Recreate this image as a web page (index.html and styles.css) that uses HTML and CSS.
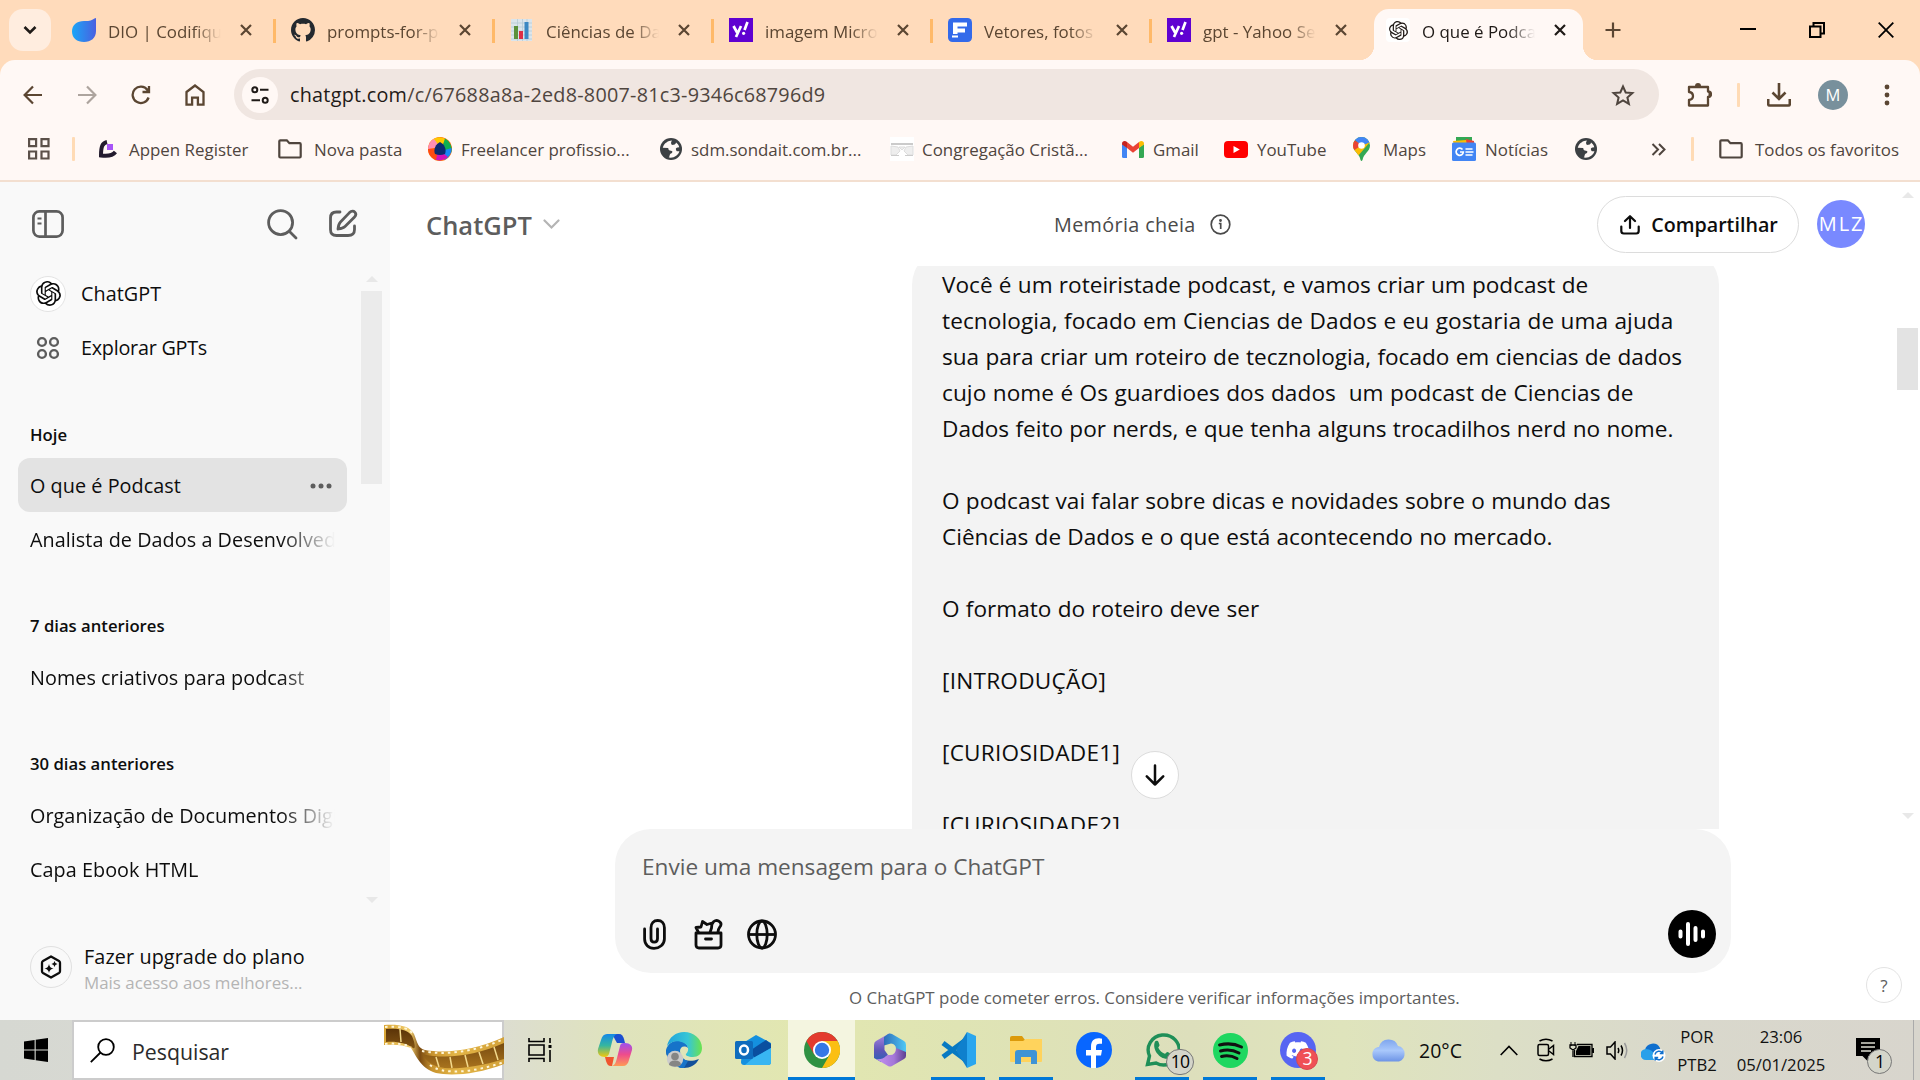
FILE: index.html
```html
<!DOCTYPE html>
<html lang="pt-BR">
<head>
<meta charset="utf-8">
<title>O que é Podcast</title>
<link rel="stylesheet" href="styles.css">
</head>
<body>
<svg class="sprite" width="0" height="0" aria-hidden="true">
  <symbol id="close" viewBox="0 0 12 12"><path d="M1 1l10 10M11 1L1 11" fill="none" stroke="currentColor" stroke-width="2.2"/></symbol>
  <symbol id="folder" viewBox="0 0 24 20"><path d="M1.3 2.3q0-1 1-1h6.5l2.6 2.9h10.3q1 0 1 1v12.3q0 1-1 1H2.3q-1 0-1-1z" fill="none" stroke="currentColor" stroke-width="2.2"/></symbol>
  <symbol id="world" viewBox="0 0 24 24"><circle cx="12" cy="12" r="12" fill="#3c4043"/><path d="M13 2.800C9 3 4.500 5.500 3 10.500l6 .5c0 2 1 3 3 3 2.500.3 1.500 2.500 0 3-2 .5-1 3-2.500 4.300 5.500 1 10.500-2.300 11.700-6.800-2 0-3 .3-3.700-1.500-.8-2 .5-3 3.500-3-.5-2.500-1.800-4-3.500-5.200-.5 2-2 2.700-4.500 2.700-1.500-1.500-1-3 0-4.700z" fill="#fff8f5"/></symbol>
  <symbol id="yahoo" viewBox="0 0 24 24"><path fill="#5f01d1" d="M0 0h24v24H0z"/><path fill="none" stroke="#fff" stroke-width="2.700" d="M4.500 8l3.600 6.500M12 8L7 19M18.500 4l-3 8"/><circle cx="14.600" cy="15.300" r="1.600" fill="#fff"/></symbol>
  <symbol id="openai" viewBox="0 0 24 24"><path fill="currentColor" d="M22.2819 9.8211a5.9847 5.9847 0 0 0-.5157-4.9108 6.0462 6.0462 0 0 0-6.5098-2.9A6.0651 6.0651 0 0 0 4.9807 4.1818a5.9847 5.9847 0 0 0-3.9977 2.9 6.0462 6.0462 0 0 0 .7427 7.0966 5.98 5.98 0 0 0 .511 4.9107 6.051 6.051 0 0 0 6.5146 2.9001A5.9847 5.9847 0 0 0 13.2599 24a6.0557 6.0557 0 0 0 5.7718-4.2058 5.9894 5.9894 0 0 0 3.9977-2.9001 6.0557 6.0557 0 0 0-.7475-7.0729zm-9.022 12.6081a4.4755 4.4755 0 0 1-2.8764-1.0408l.1419-.0804 4.7783-2.7582a.7948.7948 0 0 0 .3927-.6813v-6.7369l2.02 1.1686a.071.071 0 0 1 .038.052v5.5826a4.504 4.504 0 0 1-4.4945 4.4944zm-9.6607-4.1254a4.4708 4.4708 0 0 1-.5346-3.0137l.142.0852 4.783 2.7582a.7712.7712 0 0 0 .7806 0l5.8428-3.3685v2.3324a.0804.0804 0 0 1-.0332.0615L9.74 19.9502a4.4992 4.4992 0 0 1-6.1408-1.6464zM2.3408 7.8956a4.485 4.485 0 0 1 2.3655-1.9728V11.6a.7664.7664 0 0 0 .3879.6765l5.8144 3.3543-2.0201 1.1685a.0757.0757 0 0 1-.071 0l-4.8303-2.7865A4.504 4.504 0 0 1 2.3408 7.872zm16.5963 3.8558L13.1038 8.364 15.1192 7.2a.0757.0757 0 0 1 .071 0l4.8303 2.7913a4.4944 4.4944 0 0 1-.6765 8.1042v-5.6772a.79.79 0 0 0-.407-.667zm2.0107-3.0231l-.142-.0852-4.7735-2.7818a.7759.7759 0 0 0-.7854 0L9.409 9.2297V6.8974a.0662.0662 0 0 1 .0284-.0615l4.8303-2.7866a4.4992 4.4992 0 0 1 6.6802 4.66zM8.3065 12.863l-2.02-1.1638a.0804.0804 0 0 1-.038-.0567V6.0742a4.4992 4.4992 0 0 1 7.3757-3.4537l-.142.0805L8.704 5.459a.7948.7948 0 0 0-.3927.6813zm1.0976-2.3654l2.602-1.4998 2.6069 1.4998v2.9994l-2.5974 1.4997-2.6067-1.4997Z"/></symbol>
</svg>

<header class="browser">
  <div class="tabstrip">
    <div class="tab-search"><svg width="14" height="10" viewBox="0 0 14 10"><path d="M1.500 2l5.500 5.500L12.500 2" fill="none" stroke="#1f1a17" stroke-width="2.600"/></svg></div>
    <div class="tabs">
      <div class="tab"><svg width="24" height="24" viewBox="0 0 24 24"><defs><linearGradient id="gd"><stop offset="0" stop-color="#1ba6f7"/><stop offset="1" stop-color="#4a5fe0"/></linearGradient></defs><path fill="url(#gd)" d="M24 0v13c0 7-5 11-12 11S0 20 0 13.500 5 3 12 3h4c4 0 6-3 8-3z"/></svg><span class="tab-title">DIO | Codifique o</span><svg class="x" width="12" height="12"><use href="#close"/></svg></div>
      <div class="tab"><svg width="24" height="24" viewBox="0 0 16 16"><path fill="#24292f" d="M8 0C3.580 0 0 3.580 0 8c0 3.540 2.290 6.530 5.470 7.590.4.07.55-.17.55-.38 0-.19-.01-.82-.01-1.490-2.010.37-2.530-.49-2.690-.94-.09-.23-.48-.94-.82-1.130-.28-.15-.68-.52-.01-.53.63-.01 1.080.58 1.230.82.72 1.210 1.870.87 2.330.66.07-.52.28-.87.51-1.070-1.780-.2-3.640-.89-3.640-3.950 0-.87.31-1.590.82-2.150-.08-.2-.36-1.020.08-2.120 0 0 .67-.21 2.200.82.64-.18 1.320-.27 2-.27s1.360.09 2 .27c1.530-1.040 2.200-.82 2.200-.82.44 1.100.16 1.920.08 2.120.51.56.82 1.270.82 2.150 0 3.070-1.870 3.750-3.650 3.950.29.25.54.73.54 1.480 0 1.070-.01 1.930-.01 2.200 0 .21.15.46.55.38A8.010 8.010 0 0 0 16 8c0-4.420-3.580-8-8-8z"/></svg><span class="tab-title">prompts-for-pod</span><svg class="x" width="12" height="12"><use href="#close"/></svg></div>
      <div class="tab"><svg width="24" height="24" viewBox="0 0 24 24"><path fill="#dbe5ec" d="M1 1h21v22H1z"/><path stroke="#b5cad6" stroke-width=".8" d="M1 5h21M1 9h21M1 13h21M1 17h21M1 21h21M7.500 1v22M12.500 1v22M17 1v22"/><path fill="#5c913b" d="M4 8h4v13H4z"/><path fill="#dd2e44" d="M9 13h4v8H9z"/><path fill="#3b88c3" d="M14.500 4h4v17h-4z"/></svg><span class="tab-title">Ciências de Dados</span><svg class="x" width="12" height="12"><use href="#close"/></svg></div>
      <div class="tab"><svg width="24" height="24"><use href="#yahoo"/></svg><span class="tab-title">imagem Microfone</span><svg class="x" width="12" height="12"><use href="#close"/></svg></div>
      <div class="tab"><svg width="24" height="24" viewBox="0 0 24 24"><rect width="24" height="24" rx="4.500" fill="#336aea"/><path fill="#fff" d="M5 4.500h14v4H9.500v2H17v4H9.500V16H5zM4 17.500h6v2H4z"/></svg><span class="tab-title">Vetores, fotos e</span><svg class="x" width="12" height="12"><use href="#close"/></svg></div>
      <div class="tab"><svg width="24" height="24"><use href="#yahoo"/></svg><span class="tab-title">gpt - Yahoo Sear</span><svg class="x" width="12" height="12"><use href="#close"/></svg></div>
      <div class="tab active"><span class="fav"><svg width="19" height="19"><use href="#openai"/></svg></span><span class="tab-title">O que é Podcast</span><svg class="x" width="12" height="12"><use href="#close"/></svg></div>
    </div>
    <svg class="newtab" width="16" height="16" viewBox="0 0 16 16"><path d="M8 .5v15M.5 8h15" stroke="#5b4632" stroke-width="2.200"/></svg>
    <div class="winctl">
      <svg width="16" height="16" viewBox="0 0 16 16"><path d="M0 7h16" stroke="#000" stroke-width="2"/></svg>
      <svg width="16" height="16" viewBox="0 0 16 16"><path d="M1 4.500h10.500V15H1zM4.500 4V1H15v10.500h-3" fill="none" stroke="#000" stroke-width="2"/></svg>
      <svg width="16" height="16" viewBox="0 0 16 16"><path d="M.7.700l14.600 14.600M15.300.700L.7 15.300" stroke="#000" stroke-width="1.800"/></svg>
    </div>
  </div>

  <div class="toolbar">
    <div class="nav">
      <svg width="20" height="20" viewBox="0 0 20 20"><path d="M19 10H2M10 1.500L1.600 10l8.400 8.500" fill="none" stroke="#5b4632" stroke-width="2.200"/></svg>
      <svg width="20" height="20" viewBox="0 0 20 20"><path d="M1 10h17M10 1.500l8.400 8.500-8.400 8.500" fill="none" stroke="#ada49e" stroke-width="2.200"/></svg>
      <svg width="20" height="20" viewBox="0 0 20 20"><path d="M17.600 12.500A8.200 8.200 0 1 1 16.500 5l1 1.300M18 1v6h-6.500" fill="none" stroke="#5b4632" stroke-width="2.300"/></svg>
      <svg width="20" height="22" viewBox="0 0 20 22"><path d="M1.500 8L10 1.500 18.500 8v12.700h-5.600v-7H7.100v7H1.500z" fill="none" stroke="#5b4632" stroke-width="2.300"/></svg>
    </div>
    <div class="omnibox">
      <span class="siteinfo"><svg width="18" height="18" viewBox="0 0 18 18" fill="none" stroke="#1f1a17" stroke-width="2"><circle cx="3.800" cy="3.800" r="2.500"/><path d="M9 3.800h8.500M.5 14.200h8.500"/><circle cx="14.200" cy="14.200" r="2.500"/></svg></span>
      <span class="url"><b>chatgpt.com</b>/c/67688a8a-2ed8-8007-81c3-9346c68796d9</span>
      <svg class="star" width="24" height="22" viewBox="0 0 24 22"><path d="M12 2.500l2.700 6 6.700.600-5 4.400 1.500 6.400-5.900-3.400-5.900 3.400 1.500-6.400-5-4.400 6.700-.6z" fill="none" stroke="#4f453e" stroke-width="2"/></svg>
    </div>
    <div class="tools">
      <svg width="26" height="26" viewBox="0 0 26 26"><path d="M3 5h19v4.500q3 0 3 2.700T22 15v8.500H3v-5.500q4-.5 4-4T3 10z" fill="none" stroke="#5b4632" stroke-width="2.300" stroke-linejoin="round"/><path d="M9 4a3 3 0 0 1 6 0zM22.500 9.500a2.800 2.800 0 0 1 0 5.400z" fill="#5b4632"/></svg>
      <i class="divider"></i>
      <svg width="24" height="24" viewBox="0 0 24 24"><path d="M12 0v15M5.500 9.500l6.500 6.500 6.500-6.500M1.200 16v5q0 1.500 1.500 1.500h18.600q1.500 0 1.500-1.500v-5" fill="none" stroke="#5b4632" stroke-width="2.600"/></svg>
      <span class="profile">M</span>
      <svg width="6" height="22" viewBox="0 0 6 22" fill="#5b4632"><circle cx="3" cy="3" r="2.400"/><circle cx="3" cy="11" r="2.400"/><circle cx="3" cy="19" r="2.400"/></svg>
    </div>
  </div>

  <div class="bookmarks">
    <span><svg width="22" height="22" viewBox="0 0 22 22" fill="none" stroke="#5b5049" stroke-width="2.200"><path d="M1.100 1.100h7v7h-7zM13.500 1.100h7v7h-7zM1.100 13.500h7v7h-7zM13.500 13.500h7v7h-7z"/></svg></span>
    <span><i class="divider"></i></span>
    <span class="bm g12"><svg width="18" height="18" viewBox="0 0 18 18"><path d="M8 2C3.500 3 2 6 2 15.500c7 1 11.500.5 14.500-3.500" fill="none" stroke="#231b2e" stroke-width="4"/><path fill="#a855f7" d="M8 4h6v6H8z"/></svg>Appen Register</span>
    <span class="bm g12"><svg width="24" height="20"><use href="#folder"/></svg>Nova pasta</span>
    <span class="bm g9"><svg width="24" height="24" viewBox="0 0 24 24"><circle cx="12" cy="12" r="12" fill="#ff6a00"/><path fill="#ffc800" d="M4 3a12 12 0 0 1 15 0l-7 6z"/><path fill="#10b050" d="M17 1.500A12 12 0 0 1 23 16l-9-5z"/><path fill="#1786f5" d="M23.500 11a12 12 0 0 1-7 12l-3-9z"/><path fill="#d212b8" d="M20 20a12 12 0 0 1-14 2l5-9z"/><path fill="#ff4a12" d="M8 23A12 12 0 0 1 0 11l10 2z"/><path fill="#ff8fb2" d="M0 12A12 12 0 0 1 6 2l6 8z"/><path fill="#0b2a70" d="M12 5c4 2 7 7 5 12q-5 2-10 0C5 12 8 7 12 5z"/></svg>Freelancer profissio...</span>
    <span class="bm g9"><svg width="22" height="22"><use href="#world"/></svg>sdm.sondait.com.br...</span>
    <span class="bm g8"><svg width="24" height="24" viewBox="0 0 24 24"><path fill="#fff" d="M0 0h24v24H0z"/><path stroke="#bbb" stroke-width="1.500" d="M1 7h22M8 7h8" fill="none"/><path stroke="#ddd" fill="#eee" d="M1 9l7 1 2 4-4 4H1zM23 9l-7 1-2 4 4 4h5zM9 10h6l-3 3z"/><path stroke="#ccc" d="M1 18.500h8M15 18.500h8"/></svg>Congregação Cristã...</span>
    <span class="bm g9"><svg width="22" height="17" viewBox="0 0 22 17"><path fill="#4285f4" d="M0 3l5 3.500V17H1.500Q0 17 0 15.500z"/><path fill="#34a853" d="M22 3l-5 3.500V17h3.500q1.500 0 1.500-1.500z"/><path fill="#ea4335" d="M5 1l6 4.700L17 1v6l-6 4.800L5 7z"/><path fill="#c5221f" d="M0 3.500V2.500C0 0 3-.7 5 1v6L0 3.500z"/><path fill="#fbbc04" d="M22 3.500V2.500C22 0 19-.7 17 1v6l5-3.500z"/></svg>Gmail</span>
    <span class="bm g9"><svg width="24" height="17" viewBox="0 0 24 17"><rect width="24" height="17" rx="4" fill="red"/><path fill="#fff" d="M9.500 5v7l6.300-3.500z"/></svg>YouTube</span>
    <span class="bm g13"><svg width="17" height="24" viewBox="0 0 17 24"><defs><clipPath id="pin"><path d="M8.500 0A8.500 8.500 0 0 1 17 8.500c0 6-6.500 8-7.500 14.500q-1 2-2 0C6.500 16.500 0 14.500 0 8.500A8.500 8.500 0 0 1 8.500 0z"/></clipPath></defs><g clip-path="url(#pin)"><path fill="#34a853" d="M0 0h17v24H0z"/><path fill="#fbbc04" d="M0 5v12l5 2L17 5z"/><path fill="#ea4335" d="M0 14V2l9 6z"/><path fill="#4285f4" d="M2 3L0 0h17v5l-4 2-5 1z"/></g><circle cx="8.500" cy="8.500" r="3.300" fill="#fff"/></svg>Maps</span>
    <span class="bm g9"><svg width="24" height="24" viewBox="0 0 24 24"><path fill="#34a853" d="M4 0h16v5H4z"/><path fill="#ea4335" d="M14 2l8 2v4H12z"/><path fill="#fbbc04" d="M1 4l13-1 1 5H2z"/><rect y="5.500" width="24" height="18.500" rx="1.500" fill="#4285f4"/><path d="M10.500 12.500A3.600 3.600 0 1 0 11.300 15H8M13.500 12h7M13.500 15h8M13.500 18h7" fill="none" stroke="#fff" stroke-width="1.700"/></svg>Notícias</span>
    <span><svg width="22" height="22"><use href="#world"/></svg></span>
    <span><svg width="15" height="13" viewBox="0 0 15 13"><path d="M1.500 1L7 6.500 1.500 12M8 1l5.500 5.500L8 12" fill="none" stroke="#4f453e" stroke-width="2"/></svg></span>
    <span><i class="divider"></i></span>
    <span class="bm g12"><svg width="24" height="20"><use href="#folder"/></svg>Todos os favoritos</span>
  </div>
</header>

<div class="app">
  <aside class="sidebar">
    <div class="side-head">
      <svg width="32" height="28" viewBox="0 0 32 28" fill="none" stroke="#5d5d5d" stroke-width="2.700"><rect x="1.400" y="1.400" width="29.200" height="25.200" rx="6"/><path d="M13.500 1v26"/><path d="M5.500 8.500h4M5.500 13.500h4" stroke-width="2.200"/></svg>
      <svg class="push" width="31" height="31" viewBox="0 0 31 31" fill="none" stroke="#5d5d5d" stroke-width="2.800" stroke-linecap="round"><circle cx="13.600" cy="13.600" r="12"/><path d="M22.500 22.500l6.500 6.500"/></svg>
      <svg width="30" height="30" viewBox="0 0 30 30" fill="none" stroke="#5d5d5d" stroke-width="2.800" stroke-linecap="round" stroke-linejoin="round"><path d="M12 3H8.500C4.500 3 2.500 5 2.500 9v11.500c0 4 2 6 6 6H20c4 0 6.500-2 6.500-6V17"/><path d="M21.500 3.600c2-2 4.300-1.600 5.300-.5 1.200 1.300 1.200 3.500-.5 5.200L17 17.500c-2 2-4.500 2.200-7 2.500.2-2.700.5-5 2.500-7z"/></svg>
    </div>
    <div class="side-scroll">
      <div class="side-list">
        <div class="row gpt"><span class="ring"><svg width="25" height="25"><use href="#openai"/></svg></span>ChatGPT</div>
        <div class="row gpt"><span class="cell"><svg width="24" height="24" viewBox="0 0 24 24" fill="none" stroke="#5d5d5d" stroke-width="2.400"><circle cx="6" cy="6" r="3.900"/><circle cx="18" cy="6" r="3.900"/><circle cx="6" cy="18" r="3.900"/><circle cx="18" cy="18" r="3.900"/></svg></span><span class="tight">Explorar GPTs</span></div>
        <h3 class="first">Hoje</h3>
        <div class="row current">O que é Podcast<svg width="22" height="6" viewBox="0 0 22 6" fill="#5d5d5d"><circle cx="3" cy="3" r="2.500"/><circle cx="11" cy="3" r="2.500"/><circle cx="19" cy="3" r="2.500"/></svg></div>
        <div class="row"><span class="fade">Analista de Dados a Desenvolvedor</span></div>
        <h3>7 dias anteriores</h3>
        <div class="row"><span class="fade">Nomes criativos para podcast</span></div>
        <h3>30 dias anteriores</h3>
        <div class="row"><span class="fade">Organização de Documentos Digitais</span></div>
        <div class="row"><span class="fade">Capa Ebook HTML</span></div>
      </div>
      <div class="bar side-bar"><i class="up"></i><i class="thumb"></i><i class="down"></i></div>
    </div>
    <div class="upgrade">
      <span class="plan-ring"><svg width="22" height="24" viewBox="0 0 22 24"><path d="M11 1.500l8 4.500q1 .6 1 1.700v8.600q0 1.100-1 1.700l-8 4.500L3 18q-1-.6-1-1.700V7.700Q2 6.600 3 6z" fill="none" stroke="#0d0d0d" stroke-width="2.300" stroke-linejoin="round"/><path d="M9 9q.6 4 4.500 4.500Q9.600 14 9 18q-.6-4-4.500-4.500Q8.400 13 9 9zM14.500 6q.4 2.600 3 3-2.600.4-3 3-.4-2.600-3-3 2.600-.4 3-3z" fill="#0d0d0d"/></svg></span>
      <div class="plan-text"><p>Fazer upgrade do plano</p><small>Mais acesso aos melhores...</small></div>
    </div>
  </aside>

  <main class="main">
    <div class="chat-head">
      <div class="model">ChatGPT<svg width="17" height="11" viewBox="0 0 17 11"><path d="M1.500 1.500l7 7 7-7" fill="none" stroke="#b4b4b4" stroke-width="2.200" stroke-linecap="round"/></svg></div>
      <div class="memory">Memória cheia<svg width="21" height="21" viewBox="0 0 21 21" fill="none" stroke="#4a4a4a" stroke-width="1.700"><circle cx="10.500" cy="10.500" r="9.300"/><path d="M8.800 9.500h1.900V15"/><circle cx="10.500" cy="6.500" r=".6" fill="#4a4a4a"/></svg></div>
      <div class="share"><svg width="20" height="20" viewBox="0 0 20 20" fill="none" stroke="#0d0d0d" stroke-width="2.200" stroke-linecap="round" stroke-linejoin="round"><path d="M10 13V1.500M5 6l5-4.800L15 6M1.300 11.500v4.500q0 2.500 2.500 2.500h12.400q2.500 0 2.500-2.500v-4.500"/></svg>Compartilhar</div>
      <div class="avatar">MLZ</div>
    </div>
    <div class="thread">
      <div class="bubble">
        <p>Você é um roteiristade podcast, e vamos criar um podcast de<br><span class="loose">tecnologia, focado em Ciencias de Dados e eu gostaria de uma ajuda</span><br>sua para criar um roteiro de tecznologia, focado em ciencias de dados<br><span class="loose">cujo nome é Os guardioes dos dados&nbsp; um podcast de Ciencias de</span><br>Dados feito por nerds, e que tenha alguns trocadilhos nerd no nome.</p>
        <p>O podcast vai falar sobre dicas e novidades sobre o mundo das<br>Ciências de Dados e o que está acontecendo no mercado.</p>
        <p>O formato do roteiro deve ser</p>
        <p class="caps">[INTRODUÇÃO]</p>
        <p class="caps">[CURIOSIDADE1]</p>
        <p class="caps">[CURIOSIDADE2]</p>
      </div>
      <span class="to-bottom"><svg width="20" height="22" viewBox="0 0 20 22"><path d="M10 1.500v19M1.800 12.300l8.200 8.200 8.200-8.200" fill="none" stroke="#0d0d0d" stroke-width="2.500" stroke-linecap="round" stroke-linejoin="round"/></svg></span>
    </div>
    <div class="composer">
      <div class="placeholder">Envie uma mensagem para o ChatGPT</div>
      <div class="actions">
        <svg width="23" height="31" viewBox="0 0 23 31"><path d="M1.600 10v10c0 5.500 4 9.400 9.400 9.400s10.400-3.900 10.400-9.400V8.700c0-4.300-2.700-7.200-6.700-7.200S8 4.400 8 8.700V19.500c0 2.300 1.200 3.600 3.200 3.600s3.300-1.300 3.300-3.600V10" fill="none" stroke="#0d0d0d" stroke-width="2.800" stroke-linecap="round"/></svg>
        <svg width="29" height="31" viewBox="0 0 29 31" fill="none" stroke="#0d0d0d" stroke-width="2.800" stroke-linejoin="round" stroke-linecap="round"><path d="M2 14h25v12q0 3-3 3H5q-3 0-3-3zM11.500 20h6"/><path d="M4.500 13.500L2 8.500l5-.5 1.500-5.500L13 5.500l5-1.500-.5 5-1.500 4.500M18.500 4.500c1-3 4-3.500 6-2.500s3 3 2 5c-1.500 2-2 2-2.500 6"/></svg>
        <svg width="30" height="31" viewBox="0 0 30 31" fill="none" stroke="#0d0d0d" stroke-width="2.800"><circle cx="15" cy="15.500" r="13.500"/><ellipse cx="15" cy="15.500" rx="5.200" ry="13.500"/><path d="M1.500 15.500h27"/></svg>
        <span class="voice"><svg width="28" height="24" viewBox="0 0 28 24" stroke="#fff" stroke-width="4" stroke-linecap="round"><path d="M2.500 9.500v5M10 2v20M17.500 6v12M25 9.500v5"/></svg></span>
      </div>
    </div>
    <div class="foot">O ChatGPT pode cometer erros. Considere verificar informações importantes.</div>
    <span class="help">?</span>
    <div class="bar main-bar"><i class="up"></i><i class="thumb"></i><i class="down"></i></div>
  </main>
</div>

<footer class="taskbar">
  <div class="start"><svg width="24" height="24" viewBox="0 0 24 24"><path d="M0 3.400l10.600-1.500v9.500H0zM11.700 1.700L24 0v11.400H11.700zM0 12.500h10.600v9.600L0 20.600zM11.700 12.500H24V24l-12.300-1.700z"/></svg></div>
  <div class="search">
    <svg width="25" height="25" viewBox="0 0 25 25"><circle cx="16" cy="9" r="7.800" fill="none" stroke="#000" stroke-width="1.800"/><path d="M10.500 14.500L.8 24.200" stroke="#000" stroke-width="1.800"/></svg>
    <span>Pesquisar</span>
    <svg class="film" width="120" height="52" viewBox="0 0 120 52"><defs><linearGradient id="fg"><stop offset="0" stop-color="#d9a636"/><stop offset=".22" stop-color="#f1cd6e"/><stop offset=".3" stop-color="#7a4a10"/><stop offset=".4" stop-color="#c8932e"/><stop offset=".6" stop-color="#e3b546"/><stop offset="1" stop-color="#d3a23a"/></linearGradient><linearGradient id="fd" x2="0" y2="1"><stop offset="0" stop-color="#5b3408"/><stop offset="1" stop-color="#a8731e"/></linearGradient></defs>
      <path fill="url(#fg)" d="M0 1c15-1 26 1 30 9 4 10 4 14 11 16 22 4 50 0 79-13v27c-28 11-54 12-68 9-16-5-20-18-25-25-7-3-16-4-27-3z"/>
      <path fill="url(#fd)" d="M2 5c14-1 22 1 26 7 3 7 4 14 1 12C22 19 12 17 2 18zM38 30c25 6 55 1 82-11v16c-28 9-54 11-65 8-10-3-14-8-17-13z"/>
      <path fill="none" stroke="#f3d98c" stroke-width="1.500" d="M16 5l1 13M52 33l3 10M66 33l2 11M81 31l3 12M95 28l4 12M110 23l4 13"/>
      <path fill="none" stroke="#fff6d8" stroke-width="2" stroke-dasharray="2.500 4" d="M1 3c17-1 25 1 29 9M1 20c10-1 20 0 26 3M38 27c25 5 55 0 82-12M46 41c12 10 43 8 74-3"/></svg>
  </div>
  <div class="taskview"><svg width="24" height="24" viewBox="0 0 24 24" fill="none" stroke="#000" stroke-width="1.600"><path d="M1 0v3.500h15V0M1 7h15v10H1zM1 24v-3.500h15V24M22 0v5M22 12v12"/><path d="M20.500 7h3v3h-3z" fill="#000" stroke="none"/></svg></div>
  <div class="apps">
    <div class="wide"><svg width="36" height="36" viewBox="0 0 36 36"><defs><linearGradient id="c1" x2="0" y2="1"><stop offset="0" stop-color="#1488e8"/><stop offset=".5" stop-color="#35b6a0"/><stop offset="1" stop-color="#f4c80c"/></linearGradient><linearGradient id="c2" x2="0" y2="1"><stop offset="0" stop-color="#9d50ee"/><stop offset=".5" stop-color="#ee4c8c"/><stop offset="1" stop-color="#ff9a55"/></linearGradient></defs><path fill="#1b4fd1" d="M15 2h7c3 0 4 2 5 5l1 4h-8z"/><path fill="#f0552f" d="M8 25h9l-2 9h-1c-3 0-4-2-5-5z"/><path fill="url(#c1)" d="M10 2h10c-3 1-4 4-5 8l-3 12c-1 2-2 3-4 3-5 0-8-3-7-8l3-9c1-4 3-6 6-6z"/><path fill="url(#c2)" d="M26 34H15c3-1 4-4 5-8l3-12c1-3 2-3 5-3 5 0 8 3 7 7l-3 10c-1 4-3 6-6 6z"/></svg></div>
    <div class="wide"><svg width="36" height="36" viewBox="0 0 36 36"><defs><linearGradient id="e1"><stop offset="0" stop-color="#1fa3dc"/><stop offset=".6" stop-color="#37c6d6"/><stop offset="1" stop-color="#6be34c"/></linearGradient></defs><path fill="#12509a" d="M13 17c-2 9 7 15 20 10-3 6-9 9-15 9C8 36 0 28 0 18z"/><path fill="#1673c9" d="M0 18C2 11 8 8 14 9c5 1 8 4 8 7-4-3-8-1-8 3 0 8 8 10 8 10l-4 7C8 36 0 28 0 18z"/><path fill="url(#e1)" d="M1 14C3 5 10 0 18 0c10 0 18 7 18 16 0 6-4 9-9 9-5 0-8-2-7-3 4-4 2-9-2-11C12 8 5 9 1 14z"/><circle cx="9" cy="27" r="8.200" fill="#cbcbcb"/><circle cx="9" cy="24.500" r="3.800" fill="#858585"/><path d="M3 33q0-4.500 6-4.500t6 4.500q-6 3.500-12 0z" fill="#858585"/></svg></div>
    <div class="wide"><svg width="36" height="36" viewBox="0 0 36 36"><path fill="#1490df" d="M8 11L21 3l15 8v19q0 3-3 3H9q-3 0-3-3z"/><path fill="#0a4fa0" d="M16 18L31 8l5 4v4L19 26z"/><path fill="#38b6f2" d="M36 16v14q0 3-3 3H10l8-7z"/><rect y="9" width="18" height="18" rx="1.500" fill="#0f6cbd"/><ellipse cx="9" cy="18" rx="4" ry="4.500" fill="none" stroke="#fff" stroke-width="2.500"/></svg></div>
    <div class="focused"><svg width="36" height="36" viewBox="0 0 36 36"><circle cx="18" cy="18" r="18" fill="#2f9142"/><path fill="#e33b2e" d="M2.400 9A18 18 0 0 1 33.600 9H18v9l-7.800 4.500z"/><path fill="#fbbf12" d="M33.600 9A18 18 0 0 1 18 36l7.800-13.500L18 9z"/><circle cx="18" cy="18" r="9" fill="#fff"/><circle cx="18" cy="18" r="7.200" fill="#3577e5"/></svg></div>
    <div><svg width="32" height="36" viewBox="0 0 32 36"><defs><linearGradient id="m1" x2="0" y2="1"><stop offset="0" stop-color="#b28be4"/><stop offset=".6" stop-color="#5d55b8"/><stop offset="1" stop-color="#2b62b4"/></linearGradient><linearGradient id="m2"><stop offset="0" stop-color="#2f6db8"/><stop offset="1" stop-color="#4dc8f6"/></linearGradient><linearGradient id="m3"><stop offset="0" stop-color="#c592f2"/><stop offset=".6" stop-color="#a477d8"/><stop offset="1" stop-color="#5c3f90"/></linearGradient></defs><path fill="url(#m1)" d="M16 1L2 9q-2 1-2 4v13l7 4 7-7-3.500-5V12z"/><path fill="url(#m2)" d="M10 5l4-3q2-1 4 0l12 7q2 1 2 4v9l-10-5q0-5-5-5.500l-7 2z"/><path fill="url(#m3)" d="M32 20v4q0 2-2 3l-12 7q-2 1-4 0L2 27q6 1 10-3l2-1q8 1 8-7z"/></svg></div>
    <div class="open"><svg width="36" height="36" viewBox="0 0 36 36"><path d="M27 7L3 25M3 11l24 18" stroke="#0779c2" stroke-width="5"/><path fill="#0f80cd" d="M27 0v36L17 20v-4z"/><path fill="#2aa6ee" d="M27 0l9 4v28l-9 4z"/></svg></div>
    <div class="open"><svg width="32" height="28" viewBox="0 0 32 28"><path fill="#dc9a0a" d="M0 2q0-2 2-2h10l3 4v3H0z"/><path fill="#ffd35c" d="M0 5h13l3-2h16v22q0 1-1 1H1q-1 0-1-1z"/><path fill="#3f93d5" d="M5 28V17q0-3 3-3h16q3 0 3 3v11h-6v-7H11v7z"/></svg></div>
    <div><svg width="36" height="36" viewBox="0 0 36 36"><circle cx="18" cy="18" r="18" fill="#0866ff"/><path fill="#fff" d="M15 36V23.500h-5V18h5v-3c0-6 3-8.700 7.500-8.700 1.700 0 2.800.2 3.500.4v5h-2.500c-2.500 0-3.500 1-3.500 3.500V18h6l-1 5.500h-5V36z"/></svg></div>
    <div class="open"><svg width="36" height="36" viewBox="0 0 36 36"><path d="M3.500 32.500l2-8.500A15.500 15 0 1 1 12 31z" fill="none" stroke="#1f8f58" stroke-width="3.400"/><path d="M11 9.500c1-1 3-1 3.500.5l1 3c.3 1-1.500 2.200-1.200 2.700 1.500 3 3.500 4.800 6.500 6 .8.200 2-2 2.800-1.700l3.400 1.700c.7.500.3 3-1 4.200C19 30 7 19 11 9.500z" fill="#1f8f58"/></svg><b class="badge">10</b></div>
    <div class="open"><svg width="35" height="35" viewBox="0 0 35 35"><circle cx="17.500" cy="17.500" r="17.500" fill="#1fd760"/><path d="M6.500 12c8-2 16-1 22 2M7.500 18c7-2 13-1 18.500 2M8.500 23.500c6-1.500 10.500-.7 15.500 2" fill="none" stroke="#111" stroke-width="3" stroke-linecap="round"/></svg></div>
    <div class="open"><svg width="36" height="36" viewBox="0 0 36 36"><circle cx="18" cy="18" r="18" fill="#5765f2"/><g transform="translate(6.500 6.500) scale(.95)"><path fill="#fff" d="M20.317 4.3698a19.7913 19.7913 0 00-4.8851-1.5152.0741.0741 0 00-.0785.0371c-.211.3753-.4447.8648-.6083 1.2495-1.8447-.2762-3.68-.2762-5.4868 0-.1636-.3933-.4058-.8742-.6177-1.2495a.077.077 0 00-.0785-.037 19.7363 19.7363 0 00-4.8852 1.515.0699.0699 0 00-.0321.0277C.5334 9.0458-.319 13.5799.0992 18.0578a.0824.0824 0 00.0312.0561c2.0528 1.5076 4.0413 2.4228 5.9929 3.0294a.0777.0777 0 00.0842-.0276c.4616-.6304.8731-1.2952 1.226-1.9942a.076.076 0 00-.0416-.1057c-.6528-.2476-1.2743-.5495-1.8722-.8923a.077.077 0 01-.0076-.1277c.1258-.0943.2517-.1923.3718-.2914a.0743.0743 0 01.0776-.0105c3.9278 1.7933 8.18 1.7933 12.0614 0a.0739.0739 0 01.0785.0095c.1202.099.246.1981.3728.2924a.077.077 0 01-.0066.1276 12.2986 12.2986 0 01-1.873.8914.0766.0766 0 00-.0407.1067c.3604.698.7719 1.3628 1.225 1.9932a.076.076 0 00.0842.0286c1.961-.6067 3.9495-1.5219 6.0023-3.0294a.077.077 0 00.0313-.0552c.5004-5.177-.8382-9.6739-3.5485-13.6604a.061.061 0 00-.0312-.0286zM8.02 15.3312c-1.1825 0-2.1569-1.0857-2.1569-2.419 0-1.3332.9555-2.4189 2.157-2.4189 1.2108 0 2.1757 1.0952 2.1568 2.419 0 1.3332-.9555 2.4189-2.1569 2.4189zm7.9748 0c-1.1825 0-2.1569-1.0857-2.1569-2.419 0-1.3332.9554-2.4189 2.1569-2.4189 1.2108 0 2.1757 1.0952 2.1568 2.419 0 1.3332-.946 2.4189-2.1568 2.4189Z"/></g></svg><b class="badge red">3</b></div>
  </div>
  <div class="weather"><svg width="37" height="26" viewBox="0 0 37 24"><defs><linearGradient id="w" x2="0" y2="1"><stop offset="0" stop-color="#7fa6ee"/><stop offset=".5" stop-color="#a9c8fb"/><stop offset="1" stop-color="#6d94e6"/></linearGradient></defs><path fill="url(#w)" d="M8 23.500a7.500 7.500 0 0 1 0-14.500h1a10 10 0 0 1 19-1 8 8 0 0 1 1 15.500z"/></svg>20°C</div>
  <div class="tray">
    <svg width="18" height="11" viewBox="0 0 18 11"><path d="M.7 10L9 1.500 17.300 10" fill="none" stroke="#000" stroke-width="1.600"/></svg>
    <svg width="18" height="24" viewBox="0 0 18 24" fill="none" stroke="#000" stroke-width="1.500"><rect x="1" y="6.500" width="10.500" height="11" rx="1.500"/><path d="M12 11l4.500-3.500v9L12 13M2.500 3q6.500-3.500 13 0M2.500 21q6.500 3.500 13 0"/></svg>
    <svg width="25" height="17" viewBox="0 0 25 17"><path d="M8 2.500h15v12H5.500V8" fill="none" stroke="#000" stroke-width="1.300"/><path d="M9.500 4h12v9H7V9z"/><path d="M23.500 6.500H25v4h-1.500zM2 0v4M6 0v4" stroke="#000"/><path d="M1 3h6v3L4 8 1 6zM4 7v8" fill="none" stroke="#000" stroke-width="1.300"/></svg>
    <svg width="23" height="19" viewBox="0 0 23 19" fill="none" stroke="#000" stroke-width="1.500"><path d="M1 6v7h3.500l4.500 5V1L4.500 6zM12 7q1.500 2.500 0 5M15 4.500q3 5 0 10"/><path d="M18.500 2q4.500 7.500 0 15" stroke="#999"/></svg>
    <svg class="cloud" width="25" height="20" viewBox="0 0 25 20"><path fill="#0f6fce" d="M4 8a8 8 0 0 1 15-2l1 9H4z"/><path fill="#28a0ea" d="M5 7q6 0 9 6v5H5A5.500 5.500 0 0 1 5 7z"/><circle cx="18" cy="13.500" r="6.500" fill="#fff"/><path d="M14 12.500a4.200 4.200 0 0 1 7.500-1.500M22 14.500a4.200 4.200 0 0 1-7.500 1.500M21.800 8.500V11.500h-3M14.200 18.500v-3h3" fill="none" stroke="#0f6fce" stroke-width="1.500"/></svg>
    <div class="two lang"><span>POR</span><span>PTB2</span></div>
    <div class="two clock"><span>23:06</span><span>05/01/2025</span></div>
    <div class="notif"><svg width="24" height="24" viewBox="0 0 24 24"><path d="M0 0h24v18H12v5.500L6.500 18H0z"/><path stroke="#dcdbd0" stroke-width="1.500" d="M5 5h14M5 9h14M5 13h10"/></svg><b class="badge">1</b></div>
  </div>
</footer>
</body>
</html>
```
FILE: styles.css
```css
* { box-sizing: border-box; margin: 0; padding: 0; }
body {
  width: 1920px; height: 1080px; overflow: hidden;
  display: flex; flex-direction: column;
  font-family: "Open Sans", "Noto Sans", sans-serif; font-size: 19.8px; color: #0d0d0d; background: #fff;
}
svg { display: block; flex: none; }
.sprite { position: absolute; }

/* browser chrome */
.browser { height: 182px; background: #ffdbbb; display: flex; flex-direction: column; }
.tabstrip { height: 60px; display: flex; padding: 9px 0 0 9px; }
.tab-search { width: 42px; height: 42px; border-radius: 14px; background: #ffeddf; display: grid; place-items: center; }
.tabs { display: flex; margin-left: 9px; }
.tab { width: 219px; height: 51px; padding: 0 23px 9px 12px; display: flex; align-items: center; gap: 12px; color: #5b4632; background: linear-gradient(#ffb968, #ffb968) right 3px top 10px / 3px 24px no-repeat; }
.tab:nth-child(6) { background: none; }
.tab-title { width: 113px; height: 26px; line-height: 26px; font-size: 16.9px; white-space: nowrap; overflow: hidden; margin-top: 3px; -webkit-mask-image: linear-gradient(90deg, #000 76%, transparent); mask-image: linear-gradient(90deg, #000 76%, transparent); }
.x { margin-left: 7px; }
.tab.active { position: relative; width: 209px; background: #fff8f5; color: #1f1a17; border-radius: 15px 15px 0 0; padding-right: 0; }
.tab.active::before, .tab.active::after { content: ""; position: absolute; bottom: 0; width: 15px; height: 15px; }
.tab.active::before { left: -15px; background: radial-gradient(circle at 0 0, transparent 15px, #fff8f5 15.5px); }
.tab.active::after { right: -15px; background: radial-gradient(circle at 100% 0, transparent 15px, #fff8f5 15.5px); }
.fav { width: 24px; height: 24px; background: #fff; border-radius: 4px; display: grid; place-items: center; flex: none; }
.newtab { margin: 13px 0 0 22px; }
.winctl { display: flex; gap: 53px; margin: 13px 26px 0 auto; }
.toolbar { height: 69px; padding-top: 9px; background: #fff8f5; border-radius: 15px 15px 0 0; display: flex; align-items: flex-start; }
.nav { width: 234px; height: 51px; padding-left: 23px; display: flex; align-items: center; gap: 34px; }
.omnibox { width: 1425px; height: 51px; border-radius: 26px; background: #f0e6e1; display: flex; align-items: center; padding: 0 24px 0 8px; }
.siteinfo { width: 36px; height: 36px; border-radius: 50%; background: #fff8f5; display: grid; place-items: center; }
.url { margin-left: 12px; font-size: 19.8px; letter-spacing: .25px; color: #4f453e; }
.url b { font-weight: 400; color: #1f1a17; }
.star { margin-left: auto; }
.tools { height: 51px; display: flex; align-items: center; margin-left: 27px; }
.divider { display: block; width: 3px; height: 24px; border-radius: 1px; background: #ffdbb5; }
.tools .divider { margin: 0 27px 0 25px; }
.profile { width: 30px; height: 30px; border-radius: 50%; background: #78909c; color: #fff; font-size: 16.5px; display: grid; place-items: center; margin: 0 36px 0 27px; }
.bookmarks { height: 53px; padding: 0 0 11px 28px; border-bottom: 2px solid #f3dfd0; background: #fff8f5; display: grid; align-items: center; grid-template-columns: 44px 27px 179px 150px 232px 230px 232px 102px 129px 99px 123px 76px 40px 28px 200px; color: #4f453e; font-size: 16.9px; white-space: nowrap; }
.bm { display: flex; align-items: center; }
.g8 { gap: 8px; } .g9 { gap: 9px; } .g12 { gap: 12px; } .g13 { gap: 13px; }

/* sidebar */
.app { height: 838px; display: flex; }
.sidebar { width: 390px; background: #f9f9f9; display: flex; flex-direction: column; }
.side-head { height: 84px; padding: 0 32px 0 32px; display: flex; align-items: center; gap: 30px; }
.push { margin-left: auto; }
.side-scroll { height: 648px; padding-left: 18px; display: flex; }
.side-list { width: 343px; }
.row { width: 329px; height: 54px; padding: 1px 12px 0; display: flex; align-items: center; border-radius: 12px; white-space: nowrap; letter-spacing: .05px; }
.row.gpt { gap: 15px; }
.tight { letter-spacing: -.25px; }
.ring, .cell { width: 36px; height: 36px; display: grid; place-items: center; }
.ring { background: #fff; border: 1px solid #e3e3e3; border-radius: 50%; }
.side-list h3 { height: 48px; margin: 36px 0 0 12px; font-size: 16.7px; font-weight: 600; line-height: 47px; }
.side-list h3.first { line-height: 50px; }
.row.current { background: #e3e3e3; justify-content: space-between; padding-right: 15px; }
.fade { width: 305px; overflow: hidden; -webkit-mask-image: linear-gradient(90deg, #000 82%, transparent); mask-image: linear-gradient(90deg, #000 82%, transparent); }
.bar { display: flex; flex-direction: column; align-items: center; width: 21px; }
.bar i { display: block; }
.up { border: 6px solid transparent; border-top: 0; border-bottom-color: #e8e8e8; }
.down { border: 6px solid transparent; border-bottom: 0; border-top-color: #e8e8e8; margin-top: auto; }
.thumb { width: 21px; background: #ebebeb; }
.side-bar { height: 637px; padding-top: 10px; }
.side-bar .thumb { height: 193px; margin-top: 9px; }
.upgrade { display: flex; gap: 12px; padding: 28px 0 0 30px; }
.plan-ring { width: 42px; height: 42px; margin-top: 4px; border: 1px solid #e0e0e0; border-radius: 50%; display: grid; place-items: center; }
.plan-text { padding-top: 1px; }
.plan-text p { line-height: 28px; letter-spacing: .1px; }
.plan-text small { display: block; font-size: 16.9px; line-height: 24px; color: #b4b4b4; }

/* conversation */
.main { width: 1530px; position: relative; display: flex; flex-direction: column; }
.chat-head { height: 84px; display: flex; align-items: center; padding: 1px 0 0 36px; }
.model { width: 628px; display: flex; align-items: center; gap: 11px; font-size: 25.5px; font-weight: 600; color: #5d5d5d; }
.memory { width: 543px; display: flex; align-items: center; gap: 14px; font-size: 19.8px; font-weight: 500; letter-spacing: .36px; color: #4a4a4a; }
.share { width: 202px; height: 57px; border: 1px solid #dcdcdc; border-radius: 28.5px; display: flex; align-items: center; justify-content: center; gap: 11px; font-size: 19.7px; font-weight: 600; padding-left: 2px; }
.avatar { width: 48px; height: 48px; margin: -2px 0 0 18px; border-radius: 50%; background: #7989ff; color: #fff; display: flex; align-items: center; justify-content: center; font-size: 20px; letter-spacing: 1.8px; font-weight: 500; padding-left: 1px; }
.thread { height: 563px; overflow: hidden; padding-left: 522px; position: relative; }
.bubble { width: 807px; height: 640px; margin-top: -17px; padding: 18px 30px; border-radius: 36px; background: #f3f3f3; font-size: 22.6px; line-height: 36px; word-spacing: .4px; white-space: nowrap; }
.bubble p { margin-bottom: 36px; }
.loose { letter-spacing: .09px; }
.caps { letter-spacing: .25px; }
.to-bottom { position: absolute; left: 741px; top: 485px; width: 48px; height: 48px; border: 1px solid #dcdcdc; border-radius: 50%; background: #fff; display: grid; place-items: center; }
.composer { width: 1116px; height: 144px; margin-left: 225px; padding: 20px 15px 0 28px; border-radius: 36px; background: #f4f4f4; }
.placeholder { margin-left: -1px; font-size: 22.6px; line-height: 36px; color: #5d5d5d; }
.actions { height: 48px; margin-top: 25px; display: flex; align-items: center; }
.actions svg + svg { margin-left: 28px; }
.actions svg:nth-child(3) { margin-left: 24px; }
.voice { margin-left: auto; width: 48px; height: 48px; border-radius: 50%; background: #000; display: grid; place-items: center; }
.foot { margin: 12px 0 0 459px; font-size: 16.9px; line-height: 26px; color: #5d5d5d; white-space: nowrap; }
.help { position: absolute; right: 18px; bottom: 17px; width: 36px; height: 36px; border: 1px solid #e3e3e3; border-radius: 50%; display: grid; place-items: center; font-size: 17px; color: #5d5d5d; }
.main-bar { position: absolute; right: 2px; top: 10px; height: 627px; }
.main-bar .thumb { height: 62px; margin-top: 130px; background: #e3e3e3; }

/* taskbar */
.taskbar { height: 60px; display: flex; background: linear-gradient(90deg, #d6d8d2 0, #dcdcd4 25%, #dfe3bd 32%, #e2e7b0 42%, #dfe4b4 50%, #dddfbc 62%, #dfe4bc 70%, #dcdfc6 78%, #d9d8cc 88%, #d8d5cd 100%); }
.start { width: 72px; display: grid; place-items: center; }
.search { width: 432px; border: 2px solid #ccc; background: #fff; display: flex; align-items: center; padding-left: 16px; font-size: 21.3px; color: #2b2b2b; }
.search span { margin: 2px 0 0 17px; }
.film { margin-left: auto; margin-right: -2px; }
.taskview { width: 76px; display: flex; align-items: center; padding-left: 24px; }
.apps { display: flex; }
.apps > div { position: relative; width: 68px; display: grid; place-items: center; }
.apps > .wide { width: 69px; }
.apps > .focused { width: 67px; margin-left: 1px; background: #f4f5e0; box-shadow: inset 0 -3px #0078d7; }
.focused + div { margin-left: 1px; }
.open::after { content: ""; position: absolute; left: 7px; right: 7px; bottom: 0; height: 3px; background: #0078d7; }
.badge { position: absolute; left: 38px; top: 29px; width: 28px; height: 26px; border-radius: 13px; border: 1px solid #777; background: #d4d5ca; color: #000; font-size: 17.5px; line-height: 1; font-weight: 500; display: grid; place-items: center; letter-spacing: -.8px; }
.badge.red { width: 22px; height: 22px; left: 32px; top: 28px; background: #ef5056; border-color: #d9484e; color: #fff; }
.weather { width: 130px; margin-left: 38px; display: flex; align-items: center; gap: 12px; font-size: 19.5px; white-space: nowrap; }
.tray { display: flex; align-items: center; flex: 1; border-right: 1px solid #aaa; margin-right: 6px; }
.tray > svg:nth-child(2) { margin-left: 19px; }
.tray > svg:nth-child(3) { margin-left: 14px; }
.tray > svg:nth-child(4) { margin-left: 12px; }
.tray > svg:nth-child(5) { margin-left: 12px; }
.cloud { margin-top: 3px; }
.two { display: flex; flex-direction: column; align-items: center; font-size: 16.7px; line-height: 28px; padding-top: 1px; color: #111; }
.lang { width: 50px; margin-left: 6px; }
.clock { width: 100px; margin-left: 9px; }
.notif { position: relative; margin-left: 25px; }
.notif .badge { left: 11px; top: 11px; width: 25px; height: 25px; }
```
